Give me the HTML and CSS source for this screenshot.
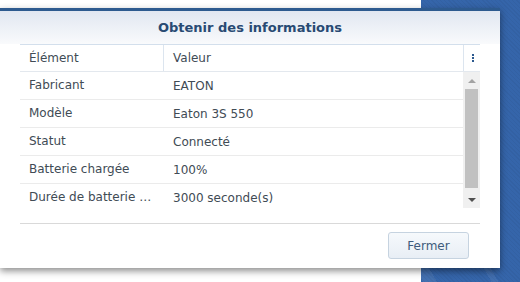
FILE: index.html
```html
<!DOCTYPE html>
<html lang="fr">
<head>
<meta charset="utf-8">
<title>Obtenir des informations</title>
<link rel="stylesheet" href="styles.css">
</head>
<body>
<div class="desktop">
  <div class="back-window"></div>
  <div class="dialog">
    <div class="dialog-header">Obtenir des informations</div>
    <div class="dialog-body">
      <div class="grid">
        <div class="grid-head">
          <div class="hcell col-name">Élément</div>
          <div class="hcell col-value">Valeur</div>
          <div class="hcell col-menu">
            <span class="dots"><i></i><i></i><i></i></span>
          </div>
        </div>
        <div class="grid-scroll">
          <div class="rows">
            <div class="row"><div class="cell col-name">Fabricant</div><div class="cell col-value">EATON</div></div>
            <div class="row"><div class="cell col-name">Modèle</div><div class="cell col-value">Eaton 3S 550</div></div>
            <div class="row"><div class="cell col-name">Statut</div><div class="cell col-value">Connecté</div></div>
            <div class="row"><div class="cell col-name">Batterie chargée</div><div class="cell col-value">100%</div></div>
            <div class="row"><div class="cell col-name">Durée de batterie …</div><div class="cell col-value">3000 seconde(s)</div></div>
          </div>
          <div class="scrollbar">
            <div class="sb-btn"><span class="arrow-up"></span></div>
            <div class="sb-thumb"></div>
            <div class="sb-btn sb-down"><span class="arrow-down"></span></div>
          </div>
        </div>
      </div>
    </div>
    <div class="dialog-footer">
      <button class="btn">Fermer</button>
    </div>
  </div>
</div>
</body>
</html>
```
FILE: styles.css
```css
* { box-sizing: border-box; }
html, body { margin: 0; padding: 0; }
body {
  width: 520px;
  height: 282px;
  overflow: hidden;
  font-family: "DejaVu Sans", Verdana, sans-serif;
  font-size: 12px;
}
.desktop {
  position: relative;
  width: 520px;
  height: 282px;
  background-color: #3565aa;
  background-image:
    linear-gradient(60deg, transparent 0 62%, rgba(255,255,255,0.07) 62% 64%, transparent 64% 72%, rgba(255,255,255,0.06) 72% 73%, transparent 73%),
    repeating-linear-gradient(45deg, rgba(0,0,0,0.04) 0 1px, transparent 1px 3px);
}
.back-window {
  position: absolute;
  left: 0;
  top: 0;
  width: 421px;
  height: 282px;
  background: #fff;
}
.dialog {
  position: absolute;
  left: 0;
  top: 8px;
  width: 500px;
  height: 260px;
  background: #fff;
  border-top: 3px solid #2d5a8f;
  box-shadow: 0 3px 7px rgba(0,0,0,0.45);
  display: flex;
  flex-direction: column;
}
.dialog-header {
  height: 33px;
  flex: none;
  display: flex;
  align-items: center;
  justify-content: center;
  font-weight: bold;
  font-size: 13px;
  color: #284a73;
  background: linear-gradient(#e1e7f1, #f9fafc);
  padding-bottom: 1px;
}
.dialog-body {
  flex: none;
  height: 180px;
  border-bottom: 1px solid #d9d9d9;
  margin: 0 20px;
  padding: 0;
}
.grid { width: 460px; }
.grid-head {
  display: flex;
  height: 28px;
  border-top: 1px solid #d3dfec;
  border-bottom: 1px solid #e3e8ee;
  color: #414b55;
}
.hcell {
  display: flex;
  align-items: center;
  padding-left: 9px;
  white-space: nowrap;
}
.grid-head .col-name { width: 144px; border-right: 1px solid #dce5ef; }
.grid-head .col-value { width: 300px; border-right: 1px solid #dce5ef; }
.grid-head .col-menu { width: 16px; padding: 0; justify-content: center; }
.dots { display: flex; flex-direction: column; gap: 1px; padding-left: 1px; }
.dots i { display: block; width: 2px; height: 2px; background: #2d5a8f; }
.grid-scroll {
  display: flex;
  height: 136px;
  overflow: hidden;
}
.rows { width: 443px; flex: none; }
.row {
  display: flex;
  height: 28px;
  border-bottom: 1px solid #ebebeb;
  color: #414b55;
}
.row:last-child { border-bottom: none; height: 24px; }
.cell {
  display: flex;
  align-items: center;
  padding-left: 9px;
  white-space: nowrap;
  overflow: hidden;
  height: 27px;
}
.row .col-name {
  width: 144px;
  padding-right: 9px;
  display: block;
  line-height: 27px;
  text-overflow: ellipsis;
}
.row .col-value { flex: 1; }
.scrollbar {
  width: 17px;
  flex: none;
  background: #f0f0f0;
  display: flex;
  flex-direction: column;
}
.sb-btn {
  height: 17px;
  flex: none;
  display: flex;
  align-items: center;
  justify-content: center;
}
.sb-down { height: 17px; margin-top: 3px; }
.sb-thumb {
  height: 99px;
  margin: 0 2px;
  background: #c1c1c1;
}
.arrow-up {
  width: 0; height: 0;
  border-left: 4px solid transparent;
  border-right: 4px solid transparent;
  border-bottom: 4px solid #a3a3a3;
}
.arrow-down {
  width: 0; height: 0;
  border-left: 4px solid transparent;
  border-right: 4px solid transparent;
  border-top: 4px solid #505050;
}
.dialog-footer {
  flex: 1;
  display: flex;
  justify-content: flex-end;
  align-items: flex-start;
  padding: 8px 31px 0 0;
}
.btn {
  width: 81px;
  height: 27px;
  border: 1px solid #c6d3e0;
  border-radius: 3px;
  background: linear-gradient(#f6f9fc, #e8eef5);
  color: #3e5b7c;
  font-family: "DejaVu Sans", Verdana, sans-serif;
  font-size: 12px;
  padding: 0;
}
```
